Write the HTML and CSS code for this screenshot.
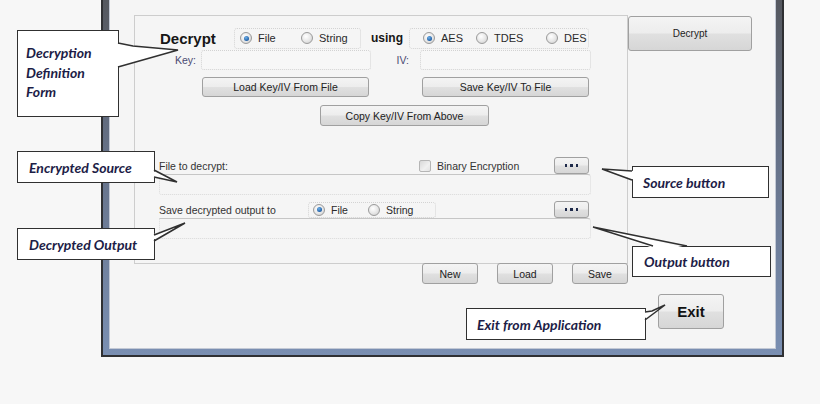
FILE: index.html
```html
<!DOCTYPE html>
<html>
<head>
<meta charset="utf-8">
<link rel="stylesheet" href="styles.css">
</head>
<body>
<div class="window">
  <div class="client">
    <div class="main">
      <div class="left">
        <div class="group">
          <div class="row1">
            <span class="title">Decrypt</span>
            <div class="rbox rbox1">
              <span class="opt w61"><i class="radio on"></i>File</span>
              <span class="opt"><i class="radio"></i>String</span>
            </div>
            <span class="using">using</span>
            <div class="rbox rbox2">
              <span class="opt w53"><i class="radio on"></i>AES</span>
              <span class="opt w70"><i class="radio"></i>TDES</span>
              <span class="opt"><i class="radio"></i>DES</span>
            </div>
          </div>
          <div class="row2">
            <span class="lbl lkey">Key:</span>
            <span class="tbox tkey"></span>
            <span class="lbl liv">IV:</span>
            <span class="tbox tiv"></span>
          </div>
          <div class="row3">
            <span class="btn b167">Load Key/IV From File</span>
            <span class="btn b167">Save Key/IV To File</span>
          </div>
          <div class="row4">
            <span class="btn b169">Copy Key/IV From Above</span>
          </div>
          <div class="row5">
            <span class="flabel w260">File to decrypt:</span>
            <span class="chkwrap"><i class="chk"></i><span class="flabel">Binary Encryption</span></span>
            <span class="btn dots"><i></i><i></i><i></i></span>
          </div>
          <div class="field"></div>
          <div class="row6">
            <span class="flabel w149">Save decrypted output to</span>
            <div class="rbox rbox3">
              <span class="opt w55"><i class="radio on"></i>File</span>
              <span class="opt"><i class="radio"></i>String</span>
            </div>
            <span class="btn dots"><i></i><i></i><i></i></span>
          </div>
          <div class="field"></div>
        </div>
        <div class="btnrow">
          <span class="btn b56">New</span>
          <span class="btn b56">Load</span>
          <span class="btn b56">Save</span>
        </div>
      </div>
      <span class="btn decrypt">Decrypt</span>
    </div>
    <div class="exitrow">
      <span class="btn exit">Exit</span>
    </div>
  </div>
</div>

<div class="callout c1"><span>Decryption</span><span>Definition</span><span>Form</span></div>
<div class="callout c2">Encrypted Source</div>
<div class="callout c3">Decrypted Output</div>
<div class="callout c4">Source button</div>
<div class="callout c5">Output button</div>
<div class="callout c6">Exit from Application</div>

<svg class="pointers" width="820" height="404" viewBox="0 0 820 404">
  <g fill="#ffffff" stroke="none">
    <polygon points="115,43 133,46 178,50 115,67"/>
    <polygon points="151,170 177,182 151,177"/>
    <polygon points="151,235 185,223 151,241"/>
    <polygon points="635,171 602,169 635,180"/>
    <polygon points="653,248 593,227 687,248"/>
    <polygon points="642,312 652,311 665,305 642,320"/>
  </g>
  <g fill="none" stroke="#303030" stroke-width="1.5">
    <polyline points="118,43 133,46 178,50 118,67"/>
    <polyline points="154,170 177,182 154,177"/>
    <polyline points="154,235 185,223 154,241"/>
    <polyline points="632,171 602,169 632,180"/>
    <polyline points="653,246 593,227 687,246"/>
    <polyline points="645,312 652,311 665,305 645,320"/>
  </g>
</svg>
</body>
</html>
```
FILE: styles.css
```css
body {
  margin: 0;
  width: 820px;
  height: 404px;
  position: relative;
  overflow: hidden;
  background: #f7f7f7;
  font-family: "Liberation Sans", Arial, sans-serif;
  color: #333;
}

.window {
  margin-left: 101px;
  width: 683px;
  height: 357px;
  box-sizing: border-box;
  border: 2px solid #2f3033;
  border-top: 0;
  padding: 0 6px 6px;
  background: linear-gradient(180deg, #55585f 0%, #667289 45%, #7a8fb2 100%);
}

.client {
  height: 100%;
  box-sizing: border-box;
  background: #f5f5f5;
  border: 1px solid #c3c9d5;
  border-top: 0;
  padding: 15px 0 0 24px;
}

.main {
  display: flex;
  align-items: flex-start;
}

.left {
  width: 494px;
}

.group {
  box-sizing: border-box;
  width: 494px;
  height: 249px;
  border: 1px solid #cdcdcd;
  padding-top: 11px;
}

/* buttons */
.btn {
  box-sizing: border-box;
  display: flex;
  align-items: center;
  justify-content: center;
  border: 1px solid #a0a0a0;
  border-radius: 3px;
  background: linear-gradient(180deg, #f4f4f4 0%, #ededed 48%, #e0e0e0 52%, #d6d6d6 100%);
  font-size: 10.5px;
  color: #222;
  white-space: nowrap;
}

.decrypt {
  width: 124px;
  height: 35px;
  margin-top: 1px;
  font-size: 10px;
}

.b167 { width: 167px; height: 20px; }
.b169 { width: 169px; height: 21px; }
.b56 { width: 56px; height: 21px; }

.dots {
  width: 35px;
  height: 17px;
  gap: 3px;
}
.dots i {
  display: block;
  width: 2.5px;
  height: 2.5px;
  background: #1e2a4a;
}

.btnrow {
  display: flex;
  justify-content: flex-end;
  gap: 19px;
  margin-top: -1px;
}

.exitrow {
  margin-top: 10px;
  padding-left: 524px;
}
.exit {
  width: 66px;
  height: 35px;
  font-size: 15px;
  font-weight: bold;
  color: #111;
}

/* row 1 */
.row1 {
  display: flex;
  align-items: center;
  height: 22px;
  padding-left: 25px;
}
.title {
  width: 74px;
  font-size: 15px;
  font-weight: bold;
  color: #161616;
}
.using {
  width: 38px;
  margin-left: 10px;
  font-size: 12px;
  font-weight: bold;
  color: #161616;
}
.rbox {
  box-sizing: border-box;
  display: flex;
  align-items: center;
  border: 1px dotted #d3d3d3;
  border-radius: 3px;
  font-size: 11px;
  color: #2a2a2a;
}
.rbox1 { width: 127px; height: 21px; padding-left: 5px; }
.rbox2 { width: 180px; height: 21px; padding-left: 13px; }
.rbox3 { width: 128px; height: 16px; padding-left: 4px; font-size: 10.5px; }

.opt {
  display: flex;
  align-items: center;
  gap: 6px;
}
.w61 { width: 61px; }
.w53 { width: 53px; }
.w70 { width: 70px; }
.w55 { width: 55px; }

.radio {
  display: block;
  width: 12px;
  height: 12px;
  box-sizing: border-box;
  border-radius: 50%;
  border: 1px solid #9a9a9a;
  background: radial-gradient(circle at 40% 35%, #ffffff 0%, #e6e6e6 55%, #c9c9c9 100%);
  position: relative;
}
.radio.on::after {
  content: "";
  position: absolute;
  left: 2.5px;
  top: 2.5px;
  width: 5px;
  height: 5px;
  border-radius: 50%;
  background: radial-gradient(circle at 40% 35%, #6fb0e8 0%, #1f5fa6 70%, #164a85 100%);
}

/* row 2 */
.row2 {
  display: flex;
  align-items: center;
  height: 20px;
  margin-top: 1px;
}
.lbl {
  font-size: 10.5px;
  color: #4a4a72;
  text-align: right;
  box-sizing: border-box;
}
.lkey { width: 61px; }
.liv { width: 40px; padding-right: 2px; }
.tbox {
  box-sizing: border-box;
  height: 20px;
  border: 1px dotted #d2d2d2;
  border-radius: 3px;
  background: #f7f7f7;
}
.tkey { width: 170px; margin-left: 5px; }
.tiv { width: 171px; margin-left: 9px; }

/* row 3/4 */
.row3 {
  display: flex;
  gap: 53px;
  margin-top: 7px;
  padding-left: 67px;
}
.row4 {
  display: flex;
  margin-top: 8px;
  padding-left: 185px;
}

/* file rows */
.row5, .row6 {
  display: flex;
  align-items: center;
  height: 17px;
  padding-left: 24px;
}
.row5 { margin-top: 31px; }
.row6 { margin-top: 6px; }

.flabel {
  font-size: 10.5px;
  color: #333;
  white-space: nowrap;
}
.w260 { width: 260px; }
.w149 { width: 149px; }
.row6 .rbox3 { margin-right: 118px; }

.chkwrap {
  width: 135px;
  display: flex;
  align-items: center;
  gap: 6px;
}
.chk {
  display: block;
  width: 12px;
  height: 12px;
  box-sizing: border-box;
  border: 1px solid #b5b5b5;
  border-radius: 2px;
  background: linear-gradient(135deg, #d8d8d8 0%, #f0f0f0 60%, #e2e2e2 100%);
}

.field {
  box-sizing: border-box;
  margin-left: 24px;
  width: 432px;
  height: 21px;
  border: 1px dotted #dadada;
  border-top: 1px solid #c6c6c6;
  border-radius: 0 3px 3px 3px;
}

/* callouts */
.callout {
  position: absolute;
  box-sizing: border-box;
  background: #ffffff;
  border: 1.5px solid #303030;
  font-family: Lato, "Liberation Sans", sans-serif;
  font-style: italic;
  font-weight: bold;
  font-size: 14px;
  color: #1d1d47;
  display: flex;
  align-items: center;
  white-space: nowrap;
}
.c1 {
  left: 17px; top: 30px; width: 102px; height: 87px;
  flex-direction: column;
  align-items: flex-start;
  justify-content: flex-start;
  padding: 12px 0 0 8px;
  line-height: 19.5px;
}
.c2 { left: 17px; top: 151px; width: 138px; height: 32px; padding-left: 11px; }
.c3 { left: 17px; top: 228px; width: 138px; height: 32px; padding-left: 11px; }
.c4 { left: 632px; top: 166px; width: 137px; height: 32px; padding-left: 10px; }
.c5 { left: 632px; top: 246px; width: 139px; height: 31px; padding-left: 11px; }
.c6 { left: 466px; top: 308px; width: 180px; height: 32px; padding-left: 10px; }

.pointers {
  position: absolute;
  left: 0;
  top: 0;
}
```
